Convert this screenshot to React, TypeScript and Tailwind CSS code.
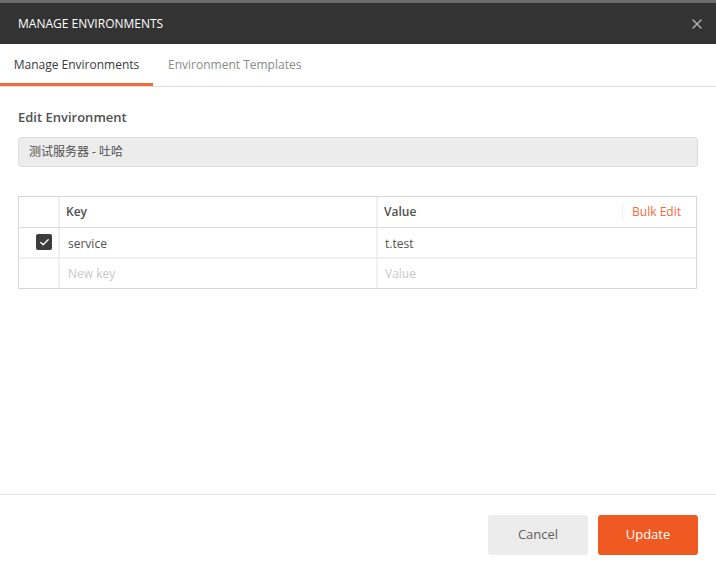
import { Check, X } from "lucide-react";

const font = { fontFamily: '"Open Sans", "Noto Sans CJK SC", sans-serif' };

export default function App() {
  return (
    <div className="flex h-[571px] w-[716px] flex-col bg-white text-[#505050]" style={font}>
      <div className="h-[3px] bg-[#6b6b6b]" />
      <div className="flex h-[41px] items-center justify-between bg-[#333333] pl-[18px] pr-[11px]">
        <span className="text-[12px] text-white">MANAGE ENVIRONMENTS</span>
        <X className="h-[16px] w-[16px] text-[#b0b0b0]" strokeWidth={2.2} />
      </div>

      <div className="flex h-[43px] items-end border-b border-[#dcdcdc]">
        <div className="flex h-full w-[153px] items-center justify-center border-b-[3px] border-[#f26b3a] pt-[3px] text-[12px] text-[#3a3a3a]">
          Manage Environments
        </div>
        <div className="flex h-full items-center pl-[15px] text-[12px] text-[#8a8a8a]">Environment Templates</div>
      </div>

      <div className="flex flex-1 flex-col px-[18px] pt-[21px]">
        <div className="text-[13px] font-semibold text-[#505050]">Edit Environment</div>
        <div className="mt-[9px] flex h-[30px] items-center rounded-[3px] border border-[#dcdcdc] bg-[#ececec] px-[10px] pt-[1px] text-[12px] text-[#505050]">
          测试服务器 - 吐哈
        </div>

        <div className="mt-[29px] mr-[1px] border border-[#d6d6d6] text-[12px]">
          <div className="flex h-[31px] border-b border-[#dcdcdc]">
            <div className="w-[41px] border-r-[2px] border-[#f0f0f0]" />
            <div className="flex w-[318px] items-center border-r-[2px] border-[#f0f0f0] pl-[6px] font-semibold text-[#505050]">Key</div>
            <div className="flex flex-1 items-center justify-between pl-[6px] pr-[15px]">
              <span className="font-semibold">Value</span>
              <span className="border-l border-[#f0f0f0] pl-[9px] text-[#f26b3a]">Bulk Edit</span>
            </div>
          </div>
          <div className="flex h-[31px] border-b-[2px] border-[#f0f0f0]">
            <div className="flex w-[41px] items-center justify-end border-r-[2px] border-[#f0f0f0] pr-[6px]">
              <span className="flex h-[16px] w-[16px] items-center justify-center rounded-[2px] bg-[#3c3c3c]">
                <Check className="h-[11px] w-[11px] text-white" strokeWidth={3} />
              </span>
            </div>
            <div className="flex w-[318px] items-center border-r-[2px] border-[#f0f0f0] pl-[8px] pt-[3px] text-[#505050]">service</div>
            <div className="flex flex-1 items-center pl-[7px] pt-[3px]">t.test</div>
          </div>
          <div className="flex h-[29px]">
            <div className="w-[41px] border-r-[2px] border-[#f0f0f0]" />
            <div className="flex w-[318px] items-center border-r-[2px] border-[#f0f0f0] pl-[8px] pt-[2px] text-[#c8c8c8]">New key</div>
            <div className="flex flex-1 items-center pl-[7px] pt-[2px] text-[#c8c8c8]">Value</div>
          </div>
        </div>
      </div>

      <div className="flex h-[77px] items-start justify-end gap-[10px] border-t border-[#e6e6e6] pr-[18px] pt-[20px]">
        <button className="h-[40px] w-[100px] rounded-[3px] bg-[#ececec] text-[13px] text-[#606060]">Cancel</button>
        <button className="h-[40px] w-[100px] rounded-[3px] bg-[#f05a22] text-[13px] text-white">Update</button>
      </div>
    </div>
  );
}
